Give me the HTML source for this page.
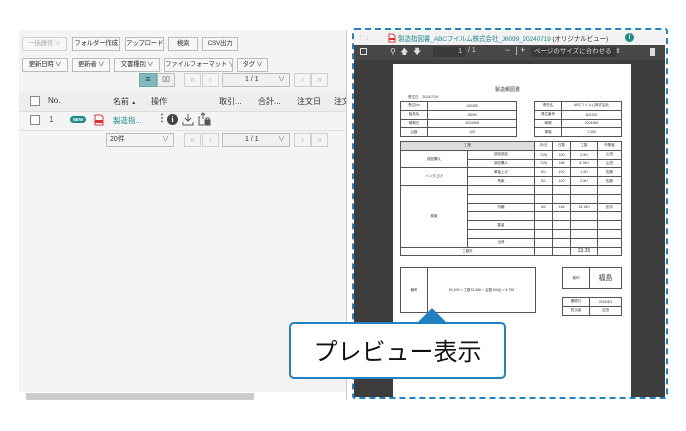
<!DOCTYPE html>
<html><head><meta charset="utf-8"><style>
*{box-sizing:border-box;margin:0;padding:0}
body{width:686px;height:431px;background:#fff;position:relative;overflow:hidden;font-family:"Liberation Sans","Noto Sans CJK JP",sans-serif;font-size:8px;color:#333}
.a{position:absolute;white-space:nowrap}
.btn{position:absolute;height:14px;border:1px solid #bbb;background:#f7f7f7;font-size:6.5px;letter-spacing:-0.3px;line-height:12px;text-align:center;color:#333;white-space:nowrap;overflow:hidden}
.dis{color:#aaa;border-color:#d0d0d0}
.sel{position:absolute;height:14px;border:1px solid #bbb;background:#f0f0f0;font-size:7px;line-height:12px;color:#333;white-space:nowrap}
.pg{position:absolute;height:14px;width:17px;border:1px solid #d0d0d0;background:#f4f4f4;color:#bbb;font-size:9px;line-height:11px;text-align:center}
.cb{position:absolute;width:10px;height:10px;border:1px solid #888;background:#fff}
.doc td{border:1px solid #555;font-size:3.5px;text-align:center;color:#333;padding:0;height:8.8px;white-space:nowrap;overflow:hidden}
.doc{border-collapse:collapse;position:absolute;table-layout:fixed}
</style></head><body>
<div class="a" style="left:19px;top:30px;width:327px;height:362px;background:#f4f4f4"></div>
<div class="btn dis" style="left:22px;top:37px;width:45px">一括操作 ∨</div>
<div class="btn" style="left:72px;top:37px;width:48px">フォルダー作成</div>
<div class="btn" style="left:125px;top:37px;width:39px">アップロード</div>
<div class="btn" style="left:168px;top:37px;width:30px">検索</div>
<div class="btn" style="left:202px;top:37px;width:36px">CSV出力</div>
<div class="btn" style="left:22px;top:58px;width:46px">更新日時 ∨</div>
<div class="btn" style="left:72px;top:58px;width:38px">更新者 ∨</div>
<div class="btn" style="left:114px;top:58px;width:46px">文書種別 ∨</div>
<div class="btn" style="left:164px;top:58px;width:69px">ファイルフォーマット ∨</div>
<div class="btn" style="left:237px;top:58px;width:31px">タグ ∨</div>
<div class="a" style="left:139px;top:73px;width:18px;height:14px;background:#7fb9be;border:1px solid #6aa;color:#244;font-size:9px;line-height:11px;text-align:center">≡</div>
<div class="a" style="left:157px;top:73px;width:18px;height:14px;background:#eee;border:1px solid #bbb;font-size:7px;line-height:12px;text-align:center">▯▯</div>
<div class="pg" style="left:184px;top:73px">«</div>
<div class="pg" style="left:202px;top:73px">‹</div>
<div class="sel" style="left:222px;top:73px;width:68px;padding-left:22px">1 / 1<span style="position:absolute;right:4px;color:#777">∨</span></div>
<div class="pg" style="left:294px;top:73px">›</div>
<div class="pg" style="left:311px;top:73px">»</div>
<div class="a" style="left:19px;top:91px;width:327px;height:21px;background:#eee;border-bottom:1px solid #ddd"></div>
<div class="cb" style="left:30px;top:96px"></div>
<div class="a" style="left:48px;top:96px;font-size:8px">No.</div>
<div class="a" style="left:113px;top:96px;font-size:8px">名前 <span style="font-size:5px">▲</span></div>
<div class="a" style="left:151px;top:96px;font-size:8px">操作</div>
<div class="a" style="left:219px;top:96px;font-size:8px">取引...</div>
<div class="a" style="left:258px;top:96px;font-size:8px">合計...</div>
<div class="a" style="left:297px;top:96px;font-size:8px">注文日</div>
<div class="a" style="left:334px;top:96px;font-size:8px;width:12px;overflow:hidden">注文</div>
<div class="a" style="left:19px;top:130px;width:327px;height:1px;background:#e2e2e2"></div>
<div class="cb" style="left:30px;top:115px"></div>
<div class="a" style="left:49px;top:115px;font-size:8px;color:#555">1</div>
<div class="a" style="left:70px;top:116px;width:16px;height:7px;border-radius:4px;background:#1f8a8a;color:#fff;font-size:4.5px;line-height:7px;text-align:center;font-weight:bold">NEW</div>
<svg class="a" style="left:94px;top:114px" width="10" height="12"><path d="M1 1h6l2 2v8H1z" fill="#fff" stroke="#d33"/><rect x="1" y="6" width="8" height="3" fill="#d33"/></svg>
<div class="a" style="left:113px;top:115px;font-size:7.5px;color:#1f8a8a">製造指...</div>
<div class="a" style="left:157px;top:113px;font-size:10px;font-weight:bold;color:#444;line-height:12px">⋮</div>
<div class="a" style="left:167px;top:114px;width:11px;height:11px;border-radius:50%;background:#444;color:#fff;font-size:8px;line-height:11px;text-align:center;font-weight:bold;font-family:'Liberation Serif',serif">i</div>
<svg class="a" style="left:182px;top:113px" width="12" height="13" fill="none" stroke="#555"><path d="M6 1v7M3 5l3 3 3-3M1 9v3h10V9"/></svg>
<svg class="a" style="left:198px;top:112px" width="13" height="14" fill="none" stroke="#555"><path d="M5 1v6M3 3l2-2 2 2M2 5H1v8h5"/><rect x="7" y="8" width="5" height="5" fill="#555"/><path d="M8 8V6h3v2"/></svg>
<div class="sel" style="left:106px;top:133px;width:68px;padding-left:3px;background:#f4f4f4">20件<span style="position:absolute;right:4px;color:#777">∨</span></div>
<div class="pg" style="left:184px;top:133px">«</div>
<div class="pg" style="left:202px;top:133px">‹</div>
<div class="sel" style="left:222px;top:133px;width:68px;padding-left:22px">1 / 1<span style="position:absolute;right:4px;color:#777">∨</span></div>
<div class="pg" style="left:294px;top:133px">›</div>
<div class="pg" style="left:311px;top:133px">»</div>
<div class="a" style="left:26px;top:393px;width:228px;height:7px;background:#ccc"></div>
<div class="a" style="left:346px;top:30px;width:1px;height:370px;background:#ccc"></div>
<div class="a" style="left:354px;top:31px;width:311px;height:14px;background:#f2f2f2"></div>
<div class="a" style="left:358px;top:32px;font-size:9px;color:#ccc">↑ ↓</div>
<svg class="a" style="left:388px;top:33px" width="8" height="10"><path d="M1 1h4l2 2v6H1z" fill="#fff" stroke="#d33"/><rect x="1" y="5" width="6" height="2" fill="#d33"/></svg>
<div class="a" style="left:398px;top:33px;font-size:6.6px;letter-spacing:-0.15px;color:#1f8a8a">製造指図書_ABCフイルム株式会社_J6099_20240719 <span style="color:#333">(オリジナルビュー)</span></div>
<div class="a" style="left:625px;top:33px;width:9px;height:9px;border-radius:50%;background:#1f8a8a;color:#fff;font-size:7px;line-height:9px;text-align:center;font-weight:bold">i</div>
<div class="a" style="left:354px;top:45px;width:311px;height:15px;background:#474747"></div>
<div class="a" style="left:360px;top:48px;width:7px;height:7px;border:1px solid #ddd"></div>
<div class="a" style="left:390px;top:46px;font-size:8px;color:#ddd">⚲&nbsp;&nbsp;🡅&nbsp;&nbsp;🡇</div>
<div class="a" style="left:433px;top:47px;width:32px;height:10px;background:#3a3a3a;color:#ddd;font-size:7px;line-height:10px;text-align:right;padding-right:3px">1</div>
<div class="a" style="left:468px;top:47px;font-size:7px;color:#ddd">/ 1</div>
<div class="a" style="left:505px;top:45px;font-size:9px;color:#ddd">−&nbsp;&nbsp;|&nbsp;+</div>
<div class="a" style="left:531px;top:47px;width:85px;height:10px;background:#3a3a3a;color:#ddd;font-size:6.5px;line-height:10px;padding-left:3px">ページのサイズに合わせる&nbsp;&nbsp;⇕</div>
<div class="a" style="left:650px;top:48px;width:5px;height:8px;background:#ddd"></div>
<div class="a" style="left:354px;top:60px;width:311px;height:337px;background:#3d3d3d"></div>
<div class="a" style="left:393px;top:64px;width:238px;height:333px;background:#fff"></div>
<div class="a" style="left:495px;top:86px;font-size:5px;color:#333">製造報図書</div>
<div class="a" style="left:408px;top:95px;font-size:3.5px;color:#333">受注日 &nbsp;&nbsp; 2024/7/19</div>
<table class="doc" style="left:400px;top:101px;width:117px"><tr><td style="width:27px">受注No</td><td>130450</td></tr><tr><td>製品名</td><td>J6099</td></tr><tr><td>納期日</td><td>2024/8/6</td></tr><tr><td>台数</td><td>100</td></tr></table>
<table class="doc" style="left:534px;top:101px;width:88px"><tr><td style="width:27px">得先名</td><td>ABCフイルム株式会社</td></tr><tr><td>発注番号</td><td>601320</td></tr><tr><td>納期</td><td>2024/8/6</td></tr><tr><td>単価</td><td>1,350</td></tr></table>
<table class="doc" style="left:400px;top:141px;width:222px">
<tr><td colspan="2" style="background:#ddd">工程</td><td style="width:18px">月/日</td><td style="width:18px">日数</td><td style="width:27px">工数</td><td style="width:24px">作業者</td></tr>
<tr><td rowspan="2" style="width:27px">部品購入</td><td>部品部品</td><td>7/26</td><td>100</td><td>0.5H</td><td>山田</td></tr>
<tr><td>部品購入</td><td>7/26</td><td>198</td><td>8.75H</td><td>山田</td></tr>
<tr><td rowspan="2">ハンダ上げ</td><td>単独上げ</td><td>8/1</td><td>100</td><td>1.0H</td><td>佐藤</td></tr>
<tr><td>荒取</td><td>8/1</td><td>100</td><td>2.5H</td><td>佐藤</td></tr>
<tr><td rowspan="7">検査</td><td></td><td></td><td></td><td></td><td></td></tr>
<tr><td></td><td></td><td></td><td></td><td></td></tr>
<tr><td>外観</td><td>8/2</td><td>148</td><td>15.15H</td><td>田中</td></tr>
<tr><td></td><td></td><td></td><td></td><td></td></tr>
<tr><td>数量</td><td></td><td></td><td></td><td></td></tr>
<tr><td></td><td></td><td></td><td></td><td></td></tr>
<tr><td>出荷</td><td></td><td></td><td></td><td></td></tr>
<tr><td colspan="2">工数計</td><td></td><td></td><td style="font-size:5px">33.35</td><td></td></tr>
</table>
<table class="doc" style="left:400px;top:267px;width:136px;height:46px"><tr><td style="width:27px">備考</td><td>¥2,400 × 工数33.35h ÷ 台数100台 = ¥ 798</td></tr></table>
<table class="doc" style="left:562px;top:267px;width:60px;height:22px"><tr><td style="width:27px">検印</td><td style="font-size:7px">福島</td></tr></table>
<table class="doc" style="left:562px;top:297px;width:60px"><tr><td style="width:27px">確認日</td><td>2024/8/1</td></tr><tr><td>担当者</td><td>吉田</td></tr></table>
<div class="a" style="left:352px;top:28px;width:316px;height:371px;border:2.5px dashed #1e82c3;border-radius:3px"></div>
<svg class="a" style="left:417px;top:307px" width="30" height="17"><path d="M0 16L15 1L30 16Z" fill="#1e82c3"/></svg>
<div class="a" style="left:289px;top:322px;width:217px;height:57px;background:#fff;border:2.5px solid #1e82c3;border-radius:5px;font-size:24px;line-height:52px;text-align:center;color:#111;font-family:'Noto Sans CJK JP',sans-serif">プレビュー表示</div>
</body></html>
